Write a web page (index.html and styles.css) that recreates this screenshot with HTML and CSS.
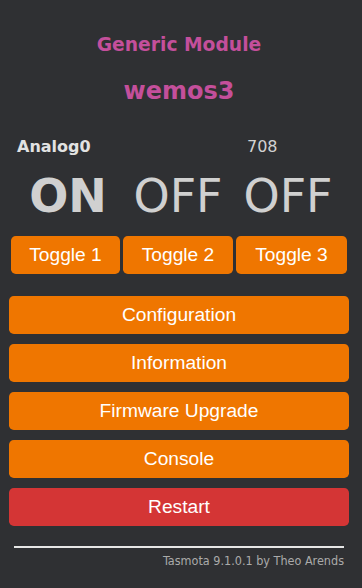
FILE: index.html
```html
<!DOCTYPE html>
<html>
<head>
<meta charset="utf-8">
<link rel="stylesheet" href="styles.css">
</head>
<body>
<div class="page">
  <header class="head">
    <h3 class="module">Generic Module</h3>
    <h2 class="device">wemos3</h2>
  </header>
  <div class="sensor">
    <span class="sensor-name">Analog0</span>
    <span class="sensor-value">708</span>
  </div>
  <div class="power">
    <div class="state on">ON</div>
    <div class="state">OFF</div>
    <div class="state">OFF</div>
  </div>
  <div class="toggles">
    <button class="btn">Toggle 1</button>
    <button class="btn">Toggle 2</button>
    <button class="btn">Toggle 3</button>
  </div>
  <div class="menu">
    <button class="btn">Configuration</button>
    <button class="btn">Information</button>
    <button class="btn">Firmware Upgrade</button>
    <button class="btn">Console</button>
    <button class="btn btn-red">Restart</button>
  </div>
  <footer class="foot">
    <hr class="rule">
    <a class="credit">Tasmota 9.1.0.1 by Theo Arends</a>
  </footer>
</div>
</body>
</html>
```
FILE: styles.css
```css
html, body {
  margin: 0;
  padding: 0;
  background: #2f3033;
}
body {
  font-family: "DejaVu Sans", Verdana, sans-serif;
  color: #d2d2d2;
}
.page {
  width: 340px;
  margin-left: 9px;
  padding-top: 34px;
}
.head {
  text-align: center;
  color: #c44f9b;
}
.module {
  margin: 0;
  font-size: 18.72px;
  line-height: 22px;
  font-weight: bold;
}
.device {
  margin: 21px 0 0;
  font-size: 24px;
  line-height: 28px;
  font-weight: bold;
}
.sensor {
  display: grid;
  grid-template-columns: 230px auto;
  margin: 32px 0 0 8px;
  font-size: 16px;
  line-height: 20px;
}
.sensor-name {
  font-weight: bold;
  color: #e2e2e2;
}
.sensor-value {
  color: #d2d2d2;
}
.power {
  display: grid;
  grid-template-columns: 110px 110px 110px;
  margin: 12px 0 0 4px;
  font-size: 46px;
  line-height: 54px;
  text-align: center;
  color: #d0d0d0;
}
.state.on {
  font-weight: bold;
}
.btn {
  display: block;
  border: 0;
  border-radius: 0.3rem;
  background: #ef7600;
  color: #fff;
  font-family: "Liberation Sans", Arial, sans-serif;
  font-size: 1.2rem;
  line-height: 2.4rem;
  padding: 0;
  width: 100%;
}
.btn-red {
  background: #d43535;
}
.toggles {
  display: grid;
  grid-template-columns: 109px 110px 111px;
  gap: 3px;
  margin: 13px 0 0 2px;
}
.menu {
  display: flex;
  flex-direction: column;
  gap: 9.6px;
  margin-top: 21.6px;
}
.foot {
  margin-top: 19.6px;
  text-align: right;
  padding: 0 5px;
}
.rule {
  margin: 0;
  border: 0;
  height: 2px;
  background: #e6e6e6;
}
.credit {
  display: block;
  margin-top: 6px;
  font-family: "DejaVu Sans Condensed", "DejaVu Sans", sans-serif;
  font-stretch: condensed;
  font-size: 12.5px;
  line-height: 14px;
  color: #aaa;
}
```
